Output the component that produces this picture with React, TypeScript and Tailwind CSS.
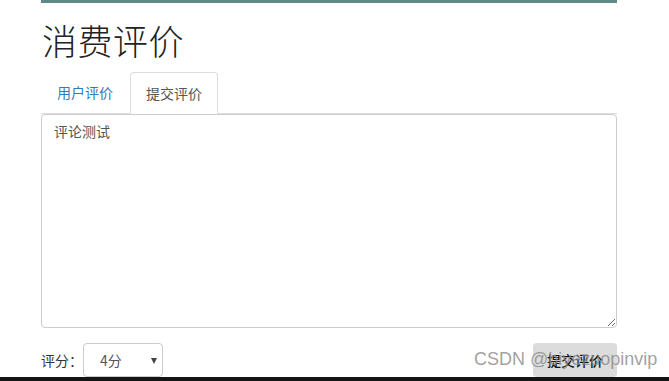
import React from "react";

export default function App() {
  const font = { fontFamily: '"Noto Sans CJK SC", "Noto Sans", sans-serif' };
  return (
    <div className="w-[669px] h-[381px] bg-white flex flex-col overflow-hidden" style={font}>
      <div className="h-[377px] pl-[41px] pr-[52px] flex flex-col">
        <div className="h-[3px] bg-[#5f8b87] w-[576px]" />
        <h1 className="mt-[17px] h-[40px] leading-[40px] text-[35px] font-light text-[#222] pl-[1px] tracking-[0.5px]">消费评价</h1>
        <div className="mt-[12px] flex items-end h-[42px] border-b border-[#dddddd] w-[576px]">
          <div className="h-[41px] px-[15px] ml-[1px] mr-[2px] flex items-center text-[14px] text-[#337ab7]">用户评价</div>
          <div className="h-[42px] -mb-[1px] px-[15px] flex items-center text-[14px] text-[#555] bg-white border border-[#dddddd] border-b-white rounded-t-[4px]">提交评价</div>
        </div>
        <textarea
          defaultValue="评论测试"
          className="w-[576px] h-[214px] border border-[#cccccc] rounded-[4px] px-[12px] py-[6px] text-[14px] leading-[20px] text-[#555] outline-none resize-y"
        />
        <div className="mt-[15px] w-[576px] h-[34px] flex items-center justify-between relative">
          <div className="flex items-center">
            <span className="text-[14px] text-[#333]">评分：</span>
            <div className="relative w-[80px] h-[34px]">
              <select
                defaultValue="4"
                className="appearance-none w-full h-full border border-[#cccccc] rounded-[4px] pl-[16px] text-[14px] text-[#555] bg-white outline-none"
              >
                <option value="5">5分</option>
                <option value="4">4分</option>
                <option value="3">3分</option>
              </select>
              <div className="absolute right-[6px] top-[15px] w-0 h-0 border-l-[3.5px] border-r-[3.5px] border-t-[6px] border-l-transparent border-r-transparent border-t-[#444] pointer-events-none" />
            </div>
          </div>
          <button className="w-[84px] h-[34px] rounded-[4px] bg-[#dcdcdc] text-[14px] text-[#111] font-medium">提交评价</button>
          <div
            className="absolute left-[433px] top-[5px] z-10 text-[18px] leading-[22px] text-[#888]/80 whitespace-nowrap pointer-events-none"
            style={{ fontFamily: '"Liberation Sans", Arial, sans-serif' }}
          >
            CSDN @biyezuopinvip
          </div>
        </div>
      </div>
      <div className="h-[4px] bg-[#141414]" />
    </div>
  );
}
